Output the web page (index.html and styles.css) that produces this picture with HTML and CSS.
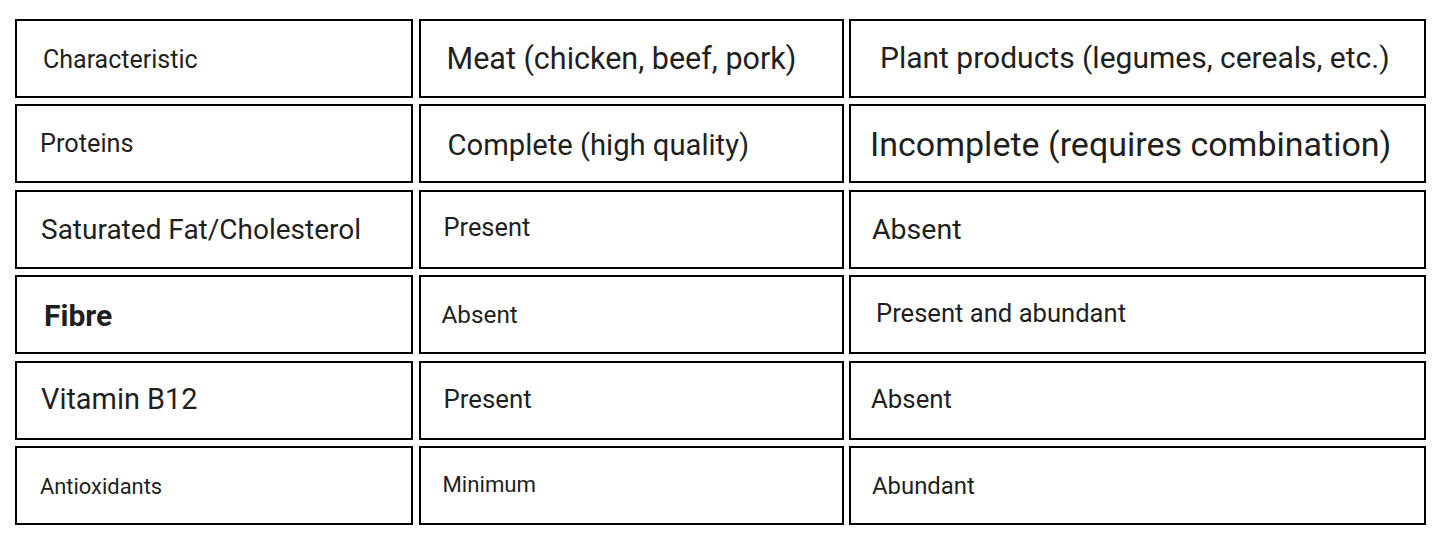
FILE: index.html
```html
<!DOCTYPE html>
<html lang="en">
<head>
<meta charset="utf-8">
<title>Meat vs Plant products</title>
<link rel="stylesheet" href="styles.css">
</head>
<body>
<div class="table">
  <div class="cell t-char">Characteristic</div>
  <div class="cell t-meat">Meat (chicken, beef, pork)</div>
  <div class="cell t-plant">Plant products (legumes, cereals, etc.)</div>

  <div class="cell t-prot">Proteins</div>
  <div class="cell t-compl">Complete (high quality)</div>
  <div class="cell t-incompl">Incomplete (requires combination)</div>

  <div class="cell t-sat">Saturated Fat/Cholesterol</div>
  <div class="cell t-pres1">Present</div>
  <div class="cell t-abs1">Absent</div>

  <div class="cell t-fibre">Fibre</div>
  <div class="cell t-abs2">Absent</div>
  <div class="cell t-presab">Present and abundant</div>

  <div class="cell t-b12">Vitamin B12</div>
  <div class="cell t-pres2">Present</div>
  <div class="cell t-abs3">Absent</div>

  <div class="cell t-anti">Antioxidants</div>
  <div class="cell t-min">Minimum</div>
  <div class="cell t-abund">Abundant</div>
</div>
</body>
</html>
```
FILE: styles.css
```css
html, body {
  margin: 0;
  padding: 0;
  background: #ffffff;
}

body {
  font-family: Roboto, "Liberation Sans", sans-serif;
  color: #1f1f1f;
}

.table {
  display: grid;
  grid-template-columns: 398px 425px 577px;
  grid-auto-rows: 79px;
  column-gap: 5.5px;
  row-gap: 6.4px;
  padding: 19px 0 0 15px;
}

.cell {
  box-sizing: border-box;
  border: 2px solid #000;
  display: flex;
  align-items: center;
  white-space: nowrap;
  line-height: 1;
}

.t-char   { font-size: 25px; padding-left: 26px; padding-top: 2px; }
.t-meat   { font-size: 30.5px; padding-left: 26px; padding-top: 2px; }
.t-plant  { font-size: 30px; padding-left: 29px; padding-bottom: 2px; }

.t-prot   { font-size: 25.3px; padding-left: 23px; }
.t-compl  { font-size: 29.2px; padding-left: 27px; padding-top: 4px; }
.t-incompl{ font-size: 34px; padding-left: 19px; }

.t-sat    { font-size: 28px; padding-left: 24px; padding-top: 2px; }
.t-pres1  { font-size: 25.4px; padding-left: 23px; padding-bottom: 3px; }
.t-abs1   { font-size: 28.5px; padding-left: 21px; padding-top: 2px; }

.t-fibre  { font-size: 30px; padding-left: 27px; font-weight: 700; padding-top: 2px; }
.t-abs2   { font-size: 24.3px; padding-left: 21px; }
.t-presab { font-size: 25.6px; padding-left: 25px; padding-bottom: 2px; }

.t-b12    { font-size: 28.9px; padding-left: 24px; padding-bottom: 2px; }
.t-pres2  { font-size: 25.8px; padding-left: 23px; }
.t-abs3   { font-size: 25.8px; padding-left: 20px; }

.t-anti   { font-size: 21.9px; padding-left: 23px; padding-top: 2px; }
.t-min    { font-size: 22.2px; padding-left: 22px; padding-bottom: 2px; }
.t-abund  { font-size: 23.9px; padding-left: 21px; padding-top: 2px; }
```
